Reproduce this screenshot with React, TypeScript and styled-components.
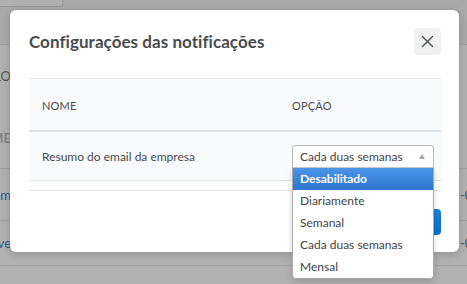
import React from "react";
import styled, { createGlobalStyle } from "styled-components";

const Global = createGlobalStyle`
  html, body { margin: 0; padding: 0; }
  body { font-family: Lato, "Noto Sans", sans-serif; }
`;

const Screen = styled.div`
  position: relative;
  width: 467px;
  height: 284px;
  overflow: hidden;
  background: #b1b1b1;
`;

/* ---------- background page (dimmed) ---------- */
const BgPage = styled.div`
  display: flex;
  flex-direction: column;
  width: 100%;
  height: 100%;
`;

const BgTopBar = styled.div`
  height: 7px;
  flex: none;
  display: flex;
  background: #a8a8a8;
`;

const BgTab = styled.div`
  width: 62px;
  background: #b0b0b0;
  border-right: 1px solid #9a9a9a;
  border-bottom: 1px solid #9a9a9a;
  border-bottom-right-radius: 3px;
`;

const BgToolbar = styled.div`
  height: 37px;
  flex: none;
  background: #a9a9a9;
  border-bottom: 1px solid #a0a0a0;
`;

const BgRow = styled.div<{ $h: number; $line?: boolean }>`
  height: ${(p) => p.$h}px;
  flex: none;
  display: flex;
  align-items: center;
  justify-content: space-between;
  box-sizing: border-box;
  border-bottom: ${(p) => (p.$line ? "1px solid #9e9e9e" : "none")};
`;

const BgLeft = styled.div`
  width: 11px;
  display: flex;
  justify-content: flex-end;
  overflow: hidden;
  white-space: nowrap;
`;

const BgRight = styled.div`
  width: 7px;
  display: flex;
  justify-content: flex-start;
  overflow: hidden;
  white-space: nowrap;
`;

const BgText = styled.span<{ $tone: "gray" | "bold" | "link" }>`
  font-size: 13px;
  font-weight: ${(p) => (p.$tone === "bold" ? 700 : 400)};
  color: ${(p) =>
    p.$tone === "link" ? "#245e92" : p.$tone === "bold" ? "#848484" : "#555"};
`;

/* ---------- modal ---------- */
const Modal = styled.div`
  position: absolute;
  top: 10px;
  left: 10px;
  width: 449px;
  height: 242px;
  box-sizing: border-box;
  background: #fff;
  border-radius: 6px;
  box-shadow: 0 2px 10px rgba(0, 0, 0, 0.18);
  padding: 18px 18px 17px 19px;
  display: flex;
  flex-direction: column;
`;

const ModalHeader = styled.div`
  display: flex;
  align-items: center;
  justify-content: space-between;
  height: 27px;
  margin-bottom: 23px;
`;

const Title = styled.h1`
  margin: 0;
  font-size: 17px;
  font-weight: 700;
  color: #494c4e;
  letter-spacing: 0.05px;
  line-height: 1;
  padding-bottom: 1px;
`;

const CloseButton = styled.button`
  width: 27px;
  height: 27px;
  padding: 0;
  border: none;
  border-radius: 4px;
  background: #f1f1f1;
  display: flex;
  align-items: center;
  justify-content: center;
  color: #494c4e;
`;

const Table = styled.div`
  display: grid;
  grid-template-columns: 250px 1fr;
  border-top: 1px solid #e3e6e9;
`;

const HeadCell = styled.div`
  height: 53px;
  display: flex;
  align-items: center;
  padding-left: 13px;
  padding-top: 2px;
  box-sizing: border-box;
  background: #f9fafb;
  border-bottom: 2px solid #dfe2e5;
  font-size: 11px;
  color: #494c4e;
  letter-spacing: 0.2px;
`;

const BodyCell = styled.div`
  height: 49px;
  box-sizing: border-box;
  display: flex;
  align-items: center;
  padding-left: 13px;
  background: #f9fafb;
  border-bottom: 1px solid #e3e6e9;
  font-size: 12px;
  color: #494c4e;
  position: relative;
`;

const Footer = styled.div`
  margin-top: 9px;
  border-top: 1px solid #e3e6e9;
  padding-top: 18px;
  display: flex;
  justify-content: flex-end;
`;

const PrimaryButton = styled.button`
  height: 26px;
  padding: 0 18px;
  border: none;
  border-radius: 4px;
  background: linear-gradient(#1d7fd6, #0b6fc6);
  color: #fff;
  font-family: Lato, sans-serif;
  font-size: 12px;
  font-weight: 700;
`;

/* ---------- select + dropdown ---------- */
const SelectWrap = styled.div`
  position: relative;
  width: 142px;
`;

const SelectBox = styled.div`
  height: 23px;
  box-sizing: border-box;
  border: 1px solid #b9bcbf;
  border-bottom-color: #c9ccce;
  border-radius: 4px 4px 0 0;
  background: #fff;
  display: flex;
  align-items: center;
  justify-content: space-between;
  padding: 0 8px 0 7px;
  font-size: 12px;
  color: #444;
`;

const Arrow = styled.span`
  width: 0;
  height: 0;
  border-left: 3px solid transparent;
  border-right: 3px solid transparent;
  border-bottom: 5px solid #a8a8a8;
`;

const DropList = styled.ul`
  position: absolute;
  top: 23px;
  left: 0;
  width: 142px;
  margin: 0;
  padding: 0;
  list-style: none;
  box-sizing: border-box;
  background: #fff;
  border: 1px solid #aaa;
  border-top: none;
  border-radius: 0 0 4px 4px;
  box-shadow: 0 3px 6px rgba(0, 0, 0, 0.15);
  z-index: 2;
`;

const Option = styled.li<{ $active?: boolean }>`
  height: 22px;
  display: flex;
  align-items: center;
  padding-left: 7px;
  font-size: 12px;
  font-weight: ${(p) => (p.$active ? 700 : 400)};
  color: ${(p) => (p.$active ? "#fff" : "#444")};
  background: ${(p) =>
    p.$active ? "linear-gradient(#4b94e6, #2a75d0)" : "transparent"};
`;

const options = [
  "Desabilitado",
  "Diariamente",
  "Semanal",
  "Cada duas semanas",
  "Mensal",
];

export default function App() {
  return (
    <>
      <Global />
      <Screen>
        <BgPage>
          <BgTopBar>
            <BgTab />
          </BgTopBar>
          <BgToolbar />
          <BgRow $h={62}>
            <BgLeft>
              <BgText $tone="gray">SELO</BgText>
            </BgLeft>
            <BgRight />
          </BgRow>
          <BgRow $h={62} $line>
            <BgLeft>
              <BgText $tone="bold">NOME</BgText>
            </BgLeft>
            <BgRight />
          </BgRow>
          <BgRow $h={52} $line>
            <BgLeft>
              <BgText $tone="link">Item</BgText>
            </BgLeft>
            <BgRight>
              <BgText $tone="gray">-0</BgText>
            </BgRight>
          </BgRow>
          <BgRow $h={45} $line>
            <BgLeft>
              <BgText $tone="link">Ave</BgText>
            </BgLeft>
            <BgRight>
              <BgText $tone="gray">-0</BgText>
            </BgRight>
          </BgRow>
        </BgPage>

        <Modal>
          <ModalHeader>
            <Title>Configurações das notificações</Title>
            <CloseButton aria-label="Fechar">
              <svg width="13" height="13" viewBox="0 0 13 13">
                <path
                  d="M1.5 1.5 L11.5 11.5 M11.5 1.5 L1.5 11.5"
                  stroke="#565a5c"
                  strokeWidth="1.5"
                  strokeLinecap="round"
                />
              </svg>
            </CloseButton>
          </ModalHeader>

          <Table>
            <HeadCell>NOME</HeadCell>
            <HeadCell>OPÇÃO</HeadCell>
            <BodyCell>Resumo do email da empresa</BodyCell>
            <BodyCell>
              <SelectWrap>
                <SelectBox>
                  <span>Cada duas semanas</span>
                  <Arrow />
                </SelectBox>
                <DropList>
                  {options.map((o, i) => (
                    <Option key={o} $active={i === 0}>
                      {o}
                    </Option>
                  ))}
                </DropList>
              </SelectWrap>
            </BodyCell>
          </Table>

          <Footer>
            <PrimaryButton>Salvar</PrimaryButton>
          </Footer>
        </Modal>
      </Screen>
    </>
  );
}
